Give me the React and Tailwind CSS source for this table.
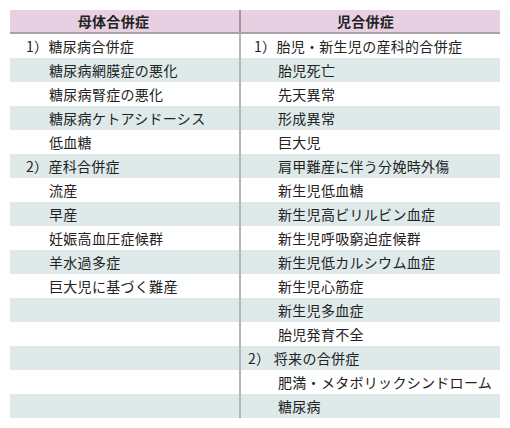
import React from 'react';

// 左列・右列の行データ（null は空セル）
const LEFT = [
  { n: '1）', t: '糖尿病合併症' },
  { t: '糖尿病網膜症の悪化' },
  { t: '糖尿病腎症の悪化' },
  { t: '糖尿病ケトアシドーシス' },
  { t: '低血糖' },
  { n: '2）', t: '産科合併症' },
  { t: '流産' },
  { t: '早産' },
  { t: '妊娠高血圧症候群' },
  { t: '羊水過多症' },
  { t: '巨大児に基づく難産' },
  null, null, null, null, null,
];

const RIGHT = [
  { n: '1）', t: '胎児・新生児の産科的合併症' },
  { t: '胎児死亡' },
  { t: '先天異常' },
  { t: '形成異常' },
  { t: '巨大児' },
  { t: '肩甲難産に伴う分娩時外傷' },
  { t: '新生児低血糖' },
  { t: '新生児高ビリルビン血症' },
  { t: '新生児呼吸窮迫症候群' },
  { t: '新生児低カルシウム血症' },
  { t: '新生児心筋症' },
  { t: '新生児多血症' },
  { t: '胎児発育不全' },
  { n: '2） ', t: '将来の合併症', wide: true },
  { t: '肥満・メタボリックシンドローム' },
  { t: '糖尿病' },
];

function LeftCell({ item }) {
  if (!item) return <div className="h-6 border-r-2 border-[#b5b5b5]" />;
  return (
    <div className={`h-6 flex items-center border-r-2 border-[#b5b5b5] ${item.n ? 'pl-[16px]' : 'pl-[39px]'}`}>
      {item.n && <span>{item.n}</span>}
      <span>{item.t}</span>
    </div>
  );
}

function RightCell({ item }) {
  const pad = item.wide ? 'pl-[7px]' : item.n ? 'pl-[13px]' : 'pl-[37px]';
  return (
    <div className={`h-6 flex items-center ${pad}`}>
      {item.n && <span className="whitespace-pre">{item.n}</span>}
      <span>{item.t}</span>
    </div>
  );
}

export default function App() {
  return (
    <div
      className="w-[510px] h-[428px] bg-white pt-[10px] px-[10px] text-[14px] text-[#222] tracking-[0.3px]"
      style={{ fontFamily: '"Noto Sans CJK JP", "Noto Sans", sans-serif' }}
    >
      <div className="w-[490px]">
        {/* ヘッダー */}
        <div className="grid grid-cols-[231px_259px] bg-[#e7d0e2] h-6 border-b-2 border-[#aa9faa]">
          <div className="flex items-center justify-center pr-[22px] font-bold border-r-2 border-[#a598a5]">母体合併症</div>
          <div className="flex items-center justify-center pr-[10px] font-bold">児合併症</div>
        </div>

        {RIGHT.map((r, i) => (
          <div key={i} className={`grid grid-cols-[231px_259px] ${i % 2 === 1 ? 'bg-[#deeaea]' : 'bg-white'}`}>
            <LeftCell item={LEFT[i]} />
            <RightCell item={r} />
          </div>
        ))}
      </div>
    </div>
  );
}
